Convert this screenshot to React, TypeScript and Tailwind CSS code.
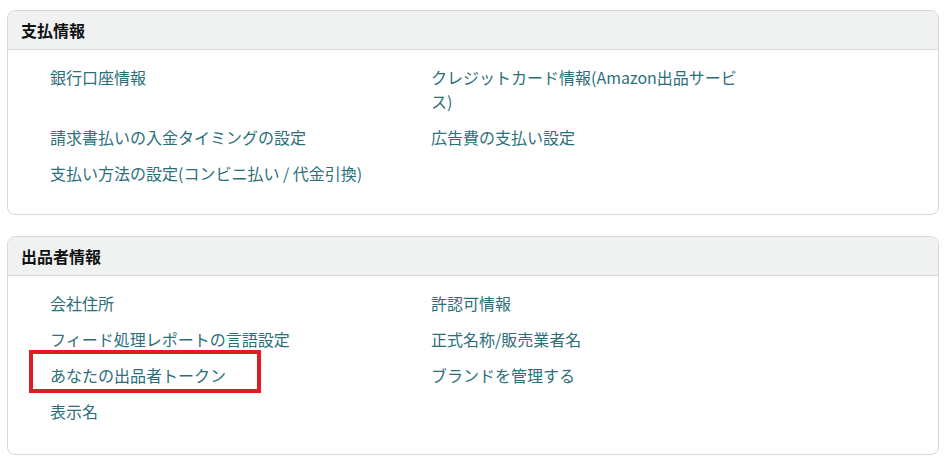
import React from "react";

type Item = { label: string; highlight?: boolean } | null;

const Section = ({ title, rows, bottom }: { title: string; rows: [Item, Item][]; bottom: string }) => {
  return (
    <div className="rounded-lg border border-[#d5d9d9] overflow-hidden bg-white">
      <div className="h-[39px] bg-[#f0f2f2] border-b border-[#d5d9d9] flex items-center px-[13px]">
        <span className="font-bold text-[16px] text-[#0f1111]">{title}</span>
      </div>
      <div className={`grid grid-cols-[381px_322px] gap-y-[12px] pl-[42px] pt-[15px] ${bottom}`}>
        {rows.map((row, i) =>
          row.map((it, j) => (
            <div key={`${i}-${j}`} className="relative leading-[24px]">
              {it?.highlight && (
                <div className="absolute -left-[21px] -top-[13px] w-[232px] h-[43px] border-[4px] border-[#e31b23]" />
              )}
              {it && <a className="text-[16px] text-[#2b6f7b] cursor-pointer">{it.label}</a>}
            </div>
          ))
        )}
      </div>
    </div>
  );
};

export default function App() {
  return (
    <div
      className="w-[946px] h-[459px] bg-white px-[7px] pt-[10px] flex flex-col gap-[21px]"
      style={{ fontFamily: '"Noto Sans CJK JP", "Noto Sans", sans-serif' }}
    >
      <Section
        title="支払情報"
        bottom="pb-[29px]"
        rows={[
          [{ label: "銀行口座情報" }, { label: "クレジットカード情報(Amazon出品サービス)" }],
          [{ label: "請求書払いの入金タイミングの設定" }, { label: "広告費の支払い設定" }],
          [{ label: "支払い方法の設定(コンビニ払い / 代金引換)" }, null],
        ]}
      />
      <Section
        title="出品者情報"
        bottom="pb-[31px]"
        rows={[
          [{ label: "会社住所" }, { label: "許認可情報" }],
          [{ label: "フィード処理レポートの言語設定" }, { label: "正式名称/販売業者名" }],
          [{ label: "あなたの出品者トークン", highlight: true }, { label: "ブランドを管理する" }],
          [{ label: "表示名" }, null],
        ]}
      />
    </div>
  );
}
